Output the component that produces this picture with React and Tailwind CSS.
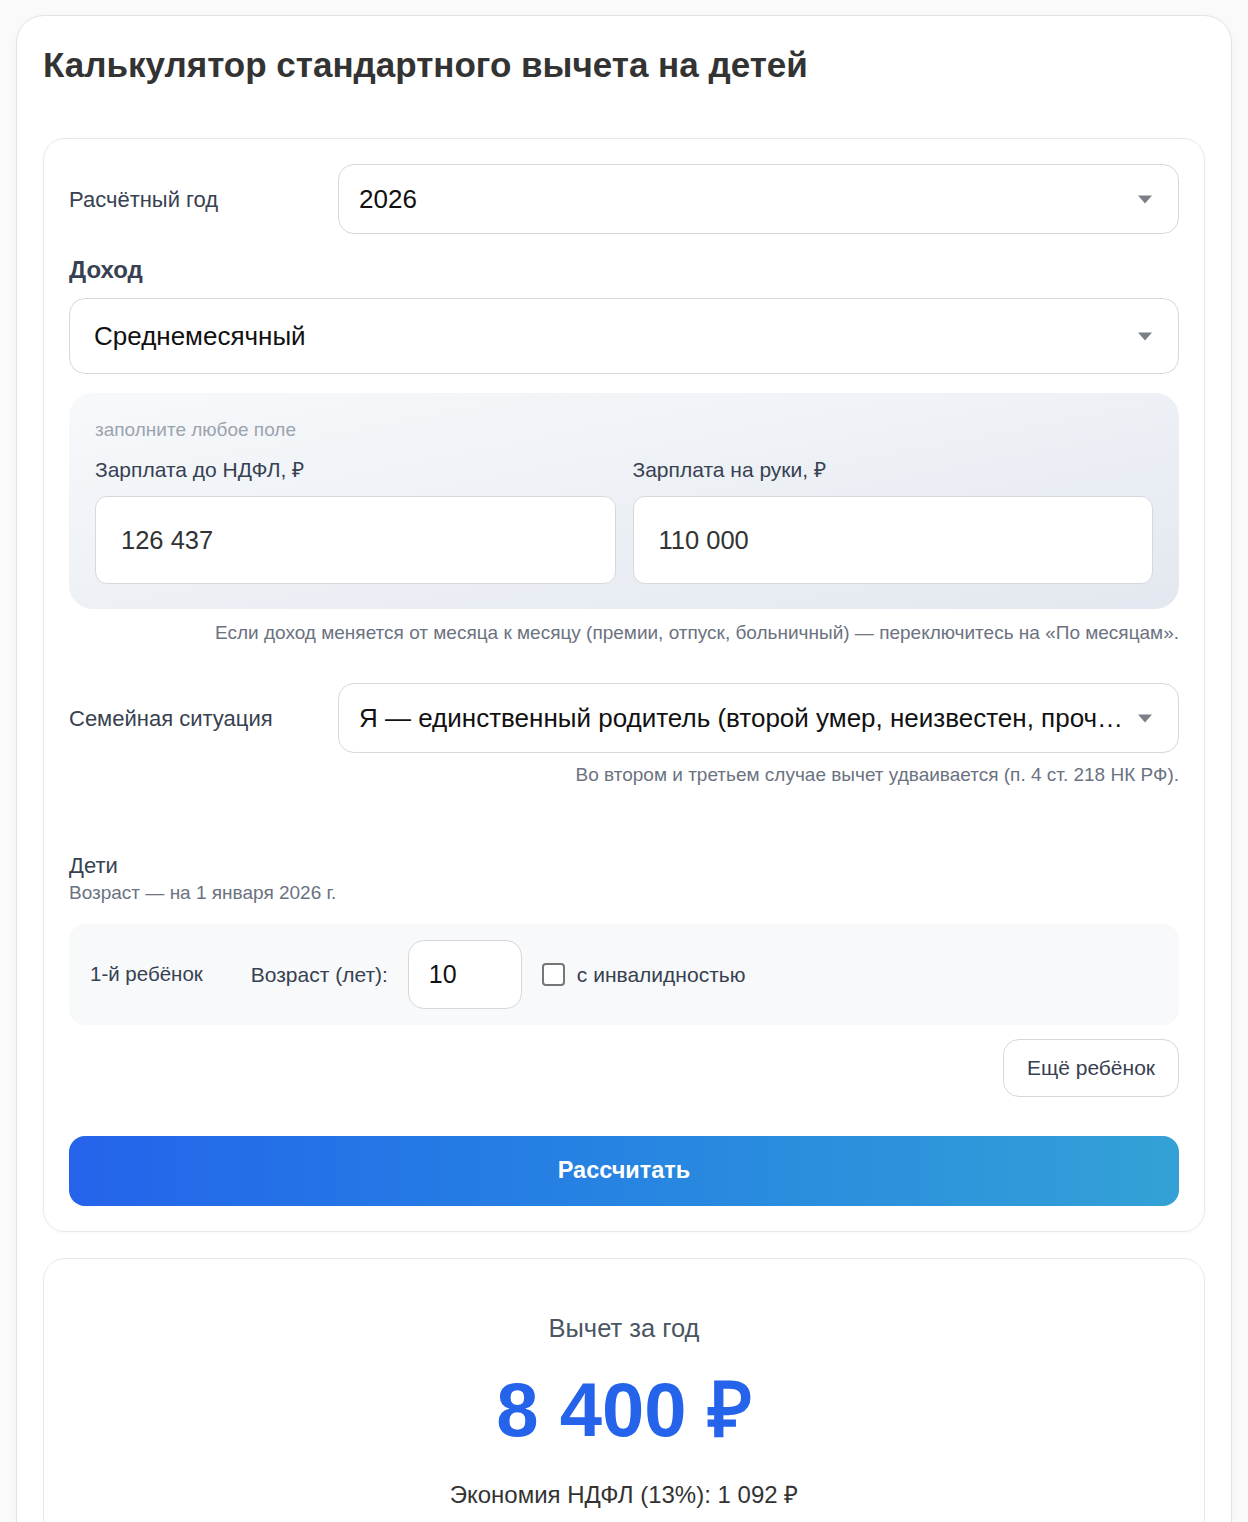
import React, { useState } from 'react';

const Caret = () => (
  <svg width="16" height="9" viewBox="0 0 16 9" className="shrink-0">
    <path d="M1 0.5 L15 0.5 L8 8.5 Z" fill="#7b8088" />
  </svg>
);

const SelectBox = ({ value, className = '' }) => (
  <div
    className={`flex items-center justify-between gap-3 rounded-2xl border border-[#d6d8dc] bg-white ${className}`}
  >
    <span className="truncate text-[26px] text-[#111]">{value}</span>
    <Caret />
  </div>
);

const MoneyInput = ({ label, value }) => (
  <div className="flex flex-col">
    <span className="text-[21px] text-[#374151] leading-none">{label}</span>
    <div className="mt-[16px] flex h-[88px] items-center rounded-xl border border-[#d6d8dc] bg-white px-[25px] text-[25.5px] text-[#333]">
      {value}
    </div>
  </div>
);

const App = () => {
  const [disabled, setDisabled] = useState(false);

  return (
    <div className="min-h-[1522px] bg-[#fafafa] px-4 pt-[15px] font-['Liberation_Sans',Arial,sans-serif]">
      <div className="rounded-[28px] border border-[#e3e3e3] bg-white px-[26px] pb-10 shadow-[0_2px_10px_rgba(0,0,0,0.04)]">
        {/* Title */}
        <h1 className="pt-[29px] text-[35px] font-bold leading-[40px] text-[#333]">
          Калькулятор стандартного вычета на детей
        </h1>

        {/* Form card */}
        <div className="mt-[53px] rounded-[22px] border border-[#e8e8ea] bg-white px-[25px] pb-[25px] pt-[25px] shadow-[0_1px_4px_rgba(0,0,0,0.03)]">
          {/* Year */}
          <div className="flex items-center">
            <span className="w-[269px] shrink-0 text-[22px] text-[#374151]">Расчётный год</span>
            <SelectBox value="2026" className="h-[70px] flex-1 pl-5 pr-[25px]" />
          </div>

          {/* Income */}
          <div className="mt-[22px] text-[24px] font-bold leading-[28px] text-[#374151]">Доход</div>
          <SelectBox value="Среднемесячный" className="mt-[14px] h-[76px] pl-6 pr-[25px]" />

          <div className="mt-[19px] rounded-3xl bg-gradient-to-br from-[#f7f9fb] to-[#e3e8f0] px-[26px] pb-[25px] pt-[27px]">
            <div className="text-[19px] leading-none text-[#9ca3af]">заполните любое поле</div>
            <div className="mt-[20px] grid grid-cols-2 gap-[17px]">
              <MoneyInput label="Зарплата до НДФЛ, ₽" value="126 437" />
              <MoneyInput label="Зарплата на руки, ₽" value="110 000" />
            </div>
          </div>
          <p className="mt-[14px] text-right text-[19px] leading-[20px] text-[#6b7280]">
            Если доход меняется от месяца к месяцу (премии, отпуск, больничный) — переключитесь на «По месяцам».
          </p>

          {/* Family */}
          <div className="mt-[40px] flex items-center">
            <span className="w-[269px] shrink-0 text-[22px] text-[#374151]">Семейная ситуация</span>
            <SelectBox
              value="Я — единственный родитель (второй умер, неизвестен, прочее)"
              className="h-[70px] min-w-0 flex-1 pl-5 pr-[25px]"
            />
          </div>
          <p className="mt-[12px] text-right text-[19px] leading-[20px] text-[#6b7280]">
            Во втором и третьем случае вычет удваивается (п. 4 ст. 218 НК РФ).
          </p>

          {/* Children */}
          <div className="mt-[68px] text-[22px] leading-[26px] text-[#374151]">Дети</div>
          <div className="mt-[3px] text-[19px] leading-[22px] text-[#6b7280]">Возраст — на 1 января 2026 г.</div>

          <div className="mt-[20px] flex h-[101px] items-center rounded-2xl bg-[#f7f9fb] px-[21px]">
            <span className="text-[20.5px] text-[#374151]">1-й ребёнок</span>
            <span className="ml-[48px] text-[21px] text-[#374151]">Возраст (лет):</span>
            <div className="ml-[20px] flex h-[69px] w-[114px] items-center rounded-2xl border border-[#d6d8dc] bg-white px-5 text-[25px] text-[#111]">
              10
            </div>
            <label className="ml-[20px] flex cursor-pointer items-center gap-3">
              <input
                type="checkbox"
                checked={disabled}
                onChange={(e) => setDisabled(e.target.checked)}
                className="h-[23px] w-[23px] appearance-none rounded-[4px] border-2 border-[#767676] bg-white checked:bg-blue-600"
              />
              <span className="text-[21px] text-[#374151]">с инвалидностью</span>
            </label>
          </div>

          <div className="mt-[14px] flex justify-end">
            <button className="h-[58px] rounded-2xl border border-[#d6d8dc] bg-white px-[23px] text-[21px] text-[#374151]">
              Ещё ребёнок
            </button>
          </div>

          <button className="mt-[39px] h-[70px] w-full rounded-2xl bg-gradient-to-r from-[#2563eb] to-[#34a1d6] text-[23.5px] font-bold text-white">
            Рассчитать
          </button>
        </div>

        {/* Result card */}
        <div className="mt-[26px] rounded-[22px] border border-[#e8e8ea] bg-white pb-10 pt-[55px] text-center">
          <div className="text-[25.5px] leading-[28px] text-[#4b5563]">Вычет за год</div>
          <div className="mt-[28px] text-[76px] font-bold leading-[80px] text-[#2563eb]">8 400 ₽</div>
          <div className="mt-[32px] text-[24px] leading-[26px] text-[#333]">Экономия НДФЛ (13%): 1 092 ₽</div>
        </div>
      </div>
    </div>
  );
};

export default App;
